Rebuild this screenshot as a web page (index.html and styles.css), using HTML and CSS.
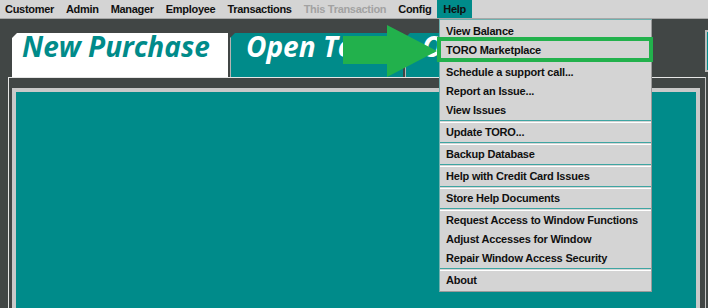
FILE: index.html
```html
<!DOCTYPE html>
<html lang="en">
  <head>
    <meta charset="UTF-8" />
    <title>TORO - New Purchase</title>
    <link rel="stylesheet" href="styles.css">
  </head>
  <body>
    <nav class="menubar">
      <span class="menu-item">Customer</span>
      <span class="menu-item">Admin</span>
      <span class="menu-item">Manager</span>
      <span class="menu-item">Employee</span>
      <span class="menu-item">Transactions</span>
      <span class="menu-item disabled">This Transaction</span>
      <span class="menu-item">Config</span>
      <span class="menu-item open">Help</span>
    </nav>

    <div class="workspace">
      <div class="tabs">
        <div class="tab active">New Purchase</div>
        <div class="tab">Open Tours</div>
        <div class="tab">Orders</div>
        <div class="side-box"></div>
      </div>
      <div class="panel">
        <div class="panel-frame">
          <div class="panel-inner"></div>
        </div>
      </div>
    </div>

    <!-- Help dropdown -->
    <ul class="dropdown">
      <li class="dd-item">View Balance</li>
      <li class="dd-item gap-after">TORO Marketplace</li>
      <li class="dd-item">Schedule a support call...</li>
      <li class="dd-item">Report an Issue...</li>
      <li class="dd-item">View Issues</li>
      <li class="dd-sep"></li>
      <li class="dd-item">Update TORO...</li>
      <li class="dd-sep"></li>
      <li class="dd-item">Backup Database</li>
      <li class="dd-sep"></li>
      <li class="dd-item">Help with Credit Card Issues</li>
      <li class="dd-sep"></li>
      <li class="dd-item">Store Help Documents</li>
      <li class="dd-sep"></li>
      <li class="dd-item">Request Access to Window Functions</li>
      <li class="dd-item">Adjust Accesses for Window</li>
      <li class="dd-item">Repair Window Access Security</li>
      <li class="dd-sep"></li>
      <li class="dd-item">About</li>
    </ul>

    <!-- annotation -->
    <div class="callout-box"></div>
    <svg class="callout-arrow" width="94" height="52" viewBox="0 0 94 52" xmlns="http://www.w3.org/2000/svg">
      <polygon points="0,11 44,11 44,0 94,26 44,52 44,39 0,39" fill="#22b14c" />
    </svg>
  </body>
</html>
```

FILE: styles.css
```css
* {
  margin: 0;
  padding: 0;
  box-sizing: border-box;
}

body {
  position: relative;
  width: 708px;
  height: 308px;
  overflow: hidden;
  background: #414645;
  font-family: "Liberation Sans", Arial, sans-serif;
  font-size: 11px;
  font-weight: bold;
  color: #101010;
}

.menubar {
  display: flex;
  height: 19px;
  background: #d4d4d4;
  border-bottom: 1px solid #a8a8a8;
  letter-spacing: -0.3px;
}

.menu-item {
  padding: 0 6px;
  line-height: 18px;
}

.menu-item:first-child {
  padding-left: 5px;
}

.menu-item.disabled {
  color: #a2a2a2;
}

.menu-item.open {
  background: #008b8a;
}

.tabs {
  display: flex;
  align-items: flex-end;
  gap: 2px;
  height: 44px;
  margin-top: 14px;
  padding-left: 12px;
}

.tab {
  flex: none;
  height: 44px;
  padding: 0 10px;
  font-family: "Open Sans", sans-serif;
  font-style: italic;
  font-weight: 700;
  font-size: 28px;
  line-height: 26px;
  white-space: nowrap;
  overflow: hidden;
  background: #008b8a;
  color: #ffffff;
  border-left: 1px solid #b4b4b4;
  clip-path: polygon(5px 0, 100% 0, 100% 100%, 0 100%, 0 5px);
}

.tab:nth-child(2) {
  width: 173px;
  padding-left: 15px;
}

.tab:nth-child(3) {
  width: 200px;
  padding-left: 16px;
}

.tab.active {
  width: 216px;
  background: #ffffff;
  color: #008b8a;
  border-left: none;
}

.side-box {
  flex: none;
  width: 12px;
  height: 42px;
  margin-left: auto;
  margin-right: -9px;
  margin-bottom: 5px;
  border: 2px solid #bcbcbc;
  background: #3d4d4c;
  box-shadow: inset 1px 1px 0 #008b8a;
}

.panel {
  width: 698px;
  height: 240px;
  margin-left: 8px;
  padding: 10px 5px 0 3px;
  border-top: 1px solid #e6e6e6;
  border-left: 1px solid #e6e6e6;
  border-right: 1px solid #c4c4c4;
}

.panel-frame {
  height: 100%;
  border: 4px solid #c9c9c9;
}

.panel-inner {
  height: 100%;
  background: #008b8a;
}

.dropdown {
  position: absolute;
  left: 439px;
  top: 19px;
  width: 213px;
  padding: 2px 0 1px;
  list-style: none;
  background: #d4d4d4;
  border: 1px solid #6fb0ae;
  border-right-color: #9a9a9a;
  border-bottom-color: #9a9a9a;
  font-size: 11px;
  letter-spacing: -0.2px;
}

.dd-item {
  height: 19px;
  padding-left: 6px;
  line-height: 19px;
  white-space: nowrap;
}

.dd-item.gap-after {
  margin-bottom: 3px;
}

.dd-sep {
  height: 3px;
  border-top: 1px solid #3fa5a2;
  border-bottom: 1px solid #ffffff;
}

.callout-box {
  position: absolute;
  left: 437px;
  top: 37px;
  width: 216px;
  height: 25px;
  border: 4px solid #22b14c;
}

.callout-arrow {
  position: absolute;
  left: 343px;
  top: 25px;
}
```
